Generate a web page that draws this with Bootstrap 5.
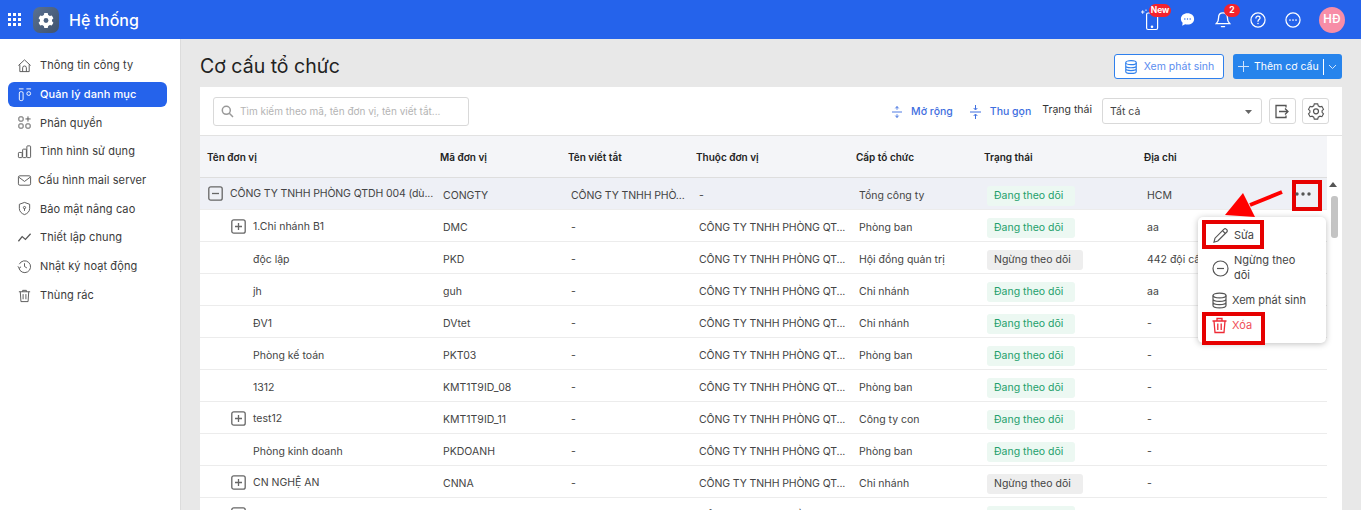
<!DOCTYPE html>
<html lang="vi">
<head>
<meta charset="utf-8">
<title>Cơ cấu tổ chức</title>
<link href="https://cdn.jsdelivr.net/npm/bootstrap@5.3.0/dist/css/bootstrap.min.css" rel="stylesheet">
<style>
html,body{height:510px;overflow:hidden}
body{font-family:Inter,"Noto Sans",sans-serif;font-size:11px;color:#333;background:#e8e8e8}
.topbar{height:39px;background:#2563eb;color:#fff;padding:0 16px 0 8px}
.topbar-title{font-size:16px;font-weight:500;margin-left:10px}
.app-logo{width:26px;height:26px;border-radius:7px;background:linear-gradient(135deg,#5a7191,#40536e);margin-left:12px}
.top-icon{position:relative;display:flex}
.pill{position:absolute;background:#f5222d;color:#fff;font-weight:700;border-radius:9px;font-size:8.5px;line-height:13px;height:13px;text-align:center}
.avatar{width:26px;height:26px;border-radius:50%;background:#f78da7;font-size:11.5px;font-weight:600}
.shell{height:471px}
.sidebar{width:181px;flex:none;background:#fff;border-right:1px solid #dcdcdc;padding-top:14px}
.side-item{height:25px;margin:0 13px 3.7px 8px;padding-left:9px;border-radius:6px;color:#3a3a3a;gap:8px;font-size:11px;letter-spacing:.1px}
.side-item svg{width:15px;height:15px;flex:none}
.side-item.on{background:#2563eb;color:#fff;font-weight:500}
.page{flex:1;min-width:0;padding:0 19px 0 19px;position:relative}
.page-head{height:48px;padding-top:7px}
.page-title{font-size:19.5px;font-weight:400;color:#222;margin:0}
.btn-ghost{height:25px;width:110px;background:#fff;border:1px solid #2f80ed;border-radius:3px;color:#5b8def;font-size:10.5px;gap:6px}
.btn-add{height:25px;width:109px;background:#2784ec;border-radius:3px;color:#fff;font-size:10.5px;margin-left:9px}
.panel{background:#fff;height:423px;overflow:hidden;position:relative}
.tools{height:49px;padding:0 13px;border-bottom:1px solid #e2e2e2}
.search-box{width:256px;height:29px;border:1px solid #d9d9d9;border-radius:3px;color:#b4b4b4;font-size:10px;padding-left:7px;gap:6px}
.tool-link{color:#3f6fe0;font-weight:500;font-size:10.5px;gap:9px;padding-top:1px}
.tool-first{gap:9px;margin-right:17px}
.tool-last{margin-right:11px}
.status-label{margin-right:10px;font-size:10.5px;position:relative;top:-1px}
.status-sel{width:160px;height:26px;border:1px solid #d9d9d9;border-radius:3px;padding:1px 9px 0 7px;color:#444;font-size:10.5px}
.square-btn{width:27px;height:26px;border:1px solid #d9d9d9;border-radius:3px;margin-left:6.5px}
.table-wrap{width:1127px}
.org-table{table-layout:fixed;width:1127px;margin:0;font-size:10.5px;color:#444;border-collapse:collapse}
.org-table th{height:41px;background:#f4f5f8;font-weight:600;color:#222;padding:2px 0 0 3px;border-bottom:1px solid #dedede;font-size:10px;vertical-align:middle}
.org-table th:first-child{padding-left:7px}
.org-table td{height:32px;padding:5px 0 0 6px;border-bottom:1px solid #ececec;white-space:nowrap;overflow:hidden;vertical-align:middle}
.org-table td:nth-child(3),.org-table td:nth-child(4),.root .name-cell span{letter-spacing:-.12px}
.org-table tr.root td{background:#eef0f6}
.name-cell{display:flex;align-items:center;gap:7px;position:relative;top:-1px}
.lvl0{padding-left:2px;top:-2px}.lvl1{padding-left:25px}.lvl1b{padding-left:47px;top:0}
.box-ic{width:15px;height:15px;flex:none;display:block}
.st{display:inline-block;height:20px;line-height:20px;padding:0 7px;border-radius:3px;width:88px;font-size:10.5px;white-space:nowrap;vertical-align:middle}
.st-on{background:#ecf8f2;color:#23a06b}
.st-off{background:#eeeeee;color:#444;width:96px}
.v-thumb{position:absolute;left:1150px;top:157px;width:7px;height:42px;background:#c4c4c4;border-radius:3px}
.v-arrow{position:absolute;left:1148px;top:143px;width:0;height:0;border-left:4.5px solid transparent;border-right:4.5px solid transparent;border-bottom:5px solid #555}
.pop-menu{position:absolute;left:1017px;top:178px;width:128px;height:126px;background:#fff;border-radius:5px;box-shadow:0 1px 6px rgba(0,0,0,.25);z-index:5;font-size:11px;color:#444}
.pop-row{position:absolute;left:0;right:0;display:flex;align-items:center;gap:5px;padding-left:14px}
.pop-row svg{width:17px;height:17px;flex:none}
.pop-edit{top:5px;height:26px}
.pop-stop{top:34px;height:34px;line-height:15px}
.pop-view{top:71px;height:24px;padding-left:13px;gap:4px}
.pop-del{top:96px;height:24px;padding-left:13px;gap:4px;color:#f0505a}
.mark-box{position:absolute;border:4px solid #e60000;z-index:6}
.mark-dots{left:1111px;top:141px;width:30px;height:31px}
.mark-edit{left:1021px;top:181px;width:62px;height:29px}
.mark-del{left:1021px;top:273px;width:63px;height:33px}
.big-arrow{position:absolute;left:1040px;top:148px;width:66px;height:36px;z-index:7}
.dots{position:absolute;left:1114px;top:153px;z-index:7}
</style>
</head>
<body>
<nav class="topbar d-flex align-items-center">
  <svg width="13" height="13" viewBox="0 0 13 13" fill="#fff"><rect width="3" height="3"/><rect x="5" width="3" height="3"/><rect x="10" width="3" height="3"/><rect y="5" width="3" height="3"/><rect x="5" y="5" width="3" height="3"/><rect x="10" y="5" width="3" height="3"/><rect y="10" width="3" height="3"/><rect x="5" y="10" width="3" height="3"/><rect x="10" y="10" width="3" height="3"/></svg>
  <span class="app-logo d-flex align-items-center justify-content-center">
    <svg width="16" height="16" viewBox="0 0 16 16"><path d="M6.300 1h3.400l.5 1.900 1.700 1 1.900-.5 1.600 2.900-1.400 1.400v1.600l1.400 1.400-1.600 2.900-1.900-.5-1.700 1-.5 1.900H6.300l-.5-1.900-1.700-1-1.900.5L.6 10.700 2 9.300V7.700L.6 6.300l1.600-2.900 1.900.5 1.700-1z" fill="#fff"/><circle cx="8" cy="8.500" r="2.400" fill="#4d6381"/></svg>
  </span>
  <span class="topbar-title">Hệ thống</span>
  <div class="ms-auto d-flex align-items-center">
    <span class="top-icon" style="margin-right:16px">
      <svg width="24" height="24" viewBox="0 0 24 24" fill="none" stroke="#fff" stroke-width="1.200"><rect x="6.600" y="5" width="11" height="16.500" rx="1.500"/><circle cx="12" cy="18.800" r=".7" fill="#fff"/><path d="M1 4h3.500M2.700 2.300v3.500M6 1.500v1.500" stroke-width=".9"/></svg>
      <span class="pill" style="left:9px;top:-3.500px;width:22px">New</span>
    </span>
    <span class="top-icon" style="margin-right:20px"><svg width="15" height="15" viewBox="0 0 17 16"><path d="M8.500 1C4.200 1 1 3.800 1 7.300c0 1.700.8 3.200 2 4.300L2.500 15l3.300-1.700c.9.300 1.800.4 2.700.4 4.300 0 7.500-2.800 7.500-6.400S12.800 1 8.500 1z" fill="#fff"/><circle cx="5.500" cy="7.500" r=".8" fill="#2563eb"/><circle cx="8.500" cy="7.500" r=".8" fill="#2563eb"/><circle cx="11.500" cy="7.500" r=".8" fill="#2563eb"/></svg></span>
    <span class="top-icon" style="margin-right:19px"><svg width="16" height="20" viewBox="0 0 17 20" fill="none" stroke="#fff" stroke-width="1.400"><path d="M8.500 2.500c-3 0-4.700 2.200-4.700 5 0 3.500-1 5-2.300 6.300h14c-1.300-1.300-2.300-2.800-2.300-6.300 0-2.800-1.700-5-4.700-5z"/><path d="M6.800 17h3.400" stroke-linecap="round"/></svg><span class="pill" style="left:9px;top:-5.500px;width:16px;border-radius:8px">2</span></span>
    <span class="top-icon" style="margin-right:19px"><svg width="16" height="16" viewBox="0 0 17 17" fill="none" stroke="#fff" stroke-width="1.300"><circle cx="8.500" cy="8.500" r="7.500"/><path d="M6.300 6.500c0-1.300 1-2.100 2.200-2.100s2.200.8 2.200 2c0 1.600-2.200 1.700-2.200 3.500" stroke-linecap="round"/><circle cx="8.500" cy="12.300" r=".8" fill="#fff" stroke="none"/></svg></span>
    <span class="top-icon" style="margin-right:18px"><svg width="16" height="16" viewBox="0 0 17 17" fill="none" stroke="#fff" stroke-width="1.300"><circle cx="8.500" cy="8.500" r="7.500"/><g fill="#fff" stroke="none"><circle cx="5.300" cy="8.500" r=".9"/><circle cx="8.500" cy="8.500" r=".9"/><circle cx="11.700" cy="8.500" r=".9"/></g></svg></span>
    <span class="avatar d-flex align-items-center justify-content-center">HĐ</span>
  </div>
</nav>
<div class="shell d-flex">
  <aside class="sidebar">
    <div class="side-item d-flex align-items-center"><svg viewBox="0 0 16 16" fill="none" stroke="#555" stroke-width="1"><path d="M1.500 8 8 2l6.500 6M3 7v7.500h10V7M6 14.500V10.500a2 2 0 0 1 4 0v4"/></svg>Thông tin công ty</div>
    <div class="side-item on d-flex align-items-center"><svg viewBox="0 0 16 16" fill="none" stroke="#fff" stroke-width="1"><path d="M2 2h5M10 2h5"/><rect x="2.500" y="5" width="4" height="9.500" rx="1.500"/><circle cx="12.500" cy="7" r="2"/></svg>Quản lý danh mục</div>
    <div class="side-item d-flex align-items-center"><svg viewBox="0 0 16 16" fill="none" stroke="#555" stroke-width="1"><rect x="2" y="2" width="4.500" height="4.500" rx="1"/><rect x="2" y="9.500" width="4.500" height="4.500" rx="1"/><rect x="9.500" y="9.500" width="4.500" height="4.500" rx="1"/><path d="M11.700 1.500v5.500M9 4.200h5.500"/></svg>Phân quyền</div>
    <div class="side-item d-flex align-items-center"><svg viewBox="0 0 16 16" fill="none" stroke="#555" stroke-width="1"><rect x="1.500" y="9" width="4" height="5.500" rx=".8"/><rect x="6" y="5.500" width="4" height="9" rx=".8"/><rect x="10.500" y="2" width="4" height="12.500" rx=".8"/></svg>Tình hình sử dụng</div>
    <div class="side-item d-flex align-items-center" style="gap:6px"><svg viewBox="0 0 16 16" fill="none" stroke="#555" stroke-width="1"><rect x="1.500" y="3" width="13" height="10" rx="1.500"/><path d="m2 4.500 6 4.500 6-4.500"/></svg>Cấu hình mail server</div>
    <div class="side-item d-flex align-items-center"><svg viewBox="0 0 16 16" fill="none" stroke="#555" stroke-width="1"><path d="M8 1.500 2.500 3.500V8c0 3.300 2.500 5.500 5.500 6.500 3-1 5.500-3.200 5.500-6.500V3.500z"/><circle cx="8" cy="7" r="1.200"/><path d="M8 8v2.500"/></svg>Bảo mật nâng cao</div>
    <div class="side-item d-flex align-items-center"><svg viewBox="0 0 16 16" fill="none" stroke="#555" stroke-width="1.300"><path d="m1.500 12 4-5 3.500 3 5.500-6"/></svg>Thiết lập chung</div>
    <div class="side-item d-flex align-items-center"><svg viewBox="0 0 16 16" fill="none" stroke="#555" stroke-width="1"><path d="M2.500 5.500A6.300 6.300 0 1 1 2 9.500"/><path d="M1 7.800 2.400 9.800 4.300 8.300M8 4.500V8l2.500 1.500"/></svg>Nhật ký hoạt động</div>
    <div class="side-item d-flex align-items-center"><svg viewBox="0 0 16 16" fill="none" stroke="#555" stroke-width="1"><path d="M2 4h12M6 4V2.500h4V4M3.500 4l.7 10.500h7.600L12.500 4M6.500 6.500v5.500M9.500 6.500v5.500"/></svg>Thùng rác</div>
  </aside>
  <main class="page">
    <div class="page-head d-flex align-items-center justify-content-between">
      <h1 class="page-title">Cơ cấu tổ chức</h1>
      <div class="d-flex align-items-center">
        <span class="btn-ghost d-flex align-items-center justify-content-center"><svg width="14" height="16" viewBox="0 0 16 17" fill="none" stroke="#2f80ed" stroke-width="1.300"><ellipse cx="8" cy="3.500" rx="6" ry="2.300"/><path d="M2 3.500v10c0 1.300 2.700 2.300 6 2.300s6-1 6-2.300v-10M2 7c0 1.300 2.700 2.300 6 2.300S14 8.300 14 7M2 10.300c0 1.300 2.700 2.300 6 2.300s6-1 6-2.300"/></svg>Xem phát sinh</span>
        <span class="btn-add d-flex align-items-center"><svg class="ms-1" width="13" height="13" viewBox="0 0 13 13" stroke="#cfe2fb" stroke-width="1"><path d="M6.500 1v11M1 6.500h11"/></svg><span class="ms-1">Thêm cơ cấu</span><span class="ms-1" style="width:1px;height:16px;background:#fff"></span><svg class="ms-1" width="9" height="9" viewBox="0 0 9 9" fill="none" stroke="#d5e6fb"><path d="m1 3 3.500 3.500L8 3"/></svg></span>
      </div>
    </div>
    <section class="panel">
      <div class="tools d-flex align-items-center">
        <div class="search-box d-flex align-items-center"><svg width="13" height="13" viewBox="0 0 13 13" fill="none" stroke="#999" stroke-width="1.500"><circle cx="5.300" cy="5.300" r="4"/><path d="m8.300 8.300 3.700 3.700"/></svg>Tìm kiếm theo mã, tên đơn vị, tên viết tắt...</div>
        <div class="ms-auto d-flex align-items-center">
          <span class="tool-link tool-first d-flex align-items-center"><svg width="10" height="14" viewBox="0 0 11 14" fill="none" stroke="#3f6fe0"><path d="M0 7h11M5.500 1v3.500M3.700 3l1.800-2 1.800 2M5.500 13V9.500M3.700 11l1.800 2 1.800-2"/></svg>Mở rộng</span>
          <span class="tool-link tool-last d-flex align-items-center"><svg width="11" height="14" viewBox="0 0 11 14" fill="none" stroke="#3f6fe0"><path d="M0 7h11M5.500 0v4.500M3.700 3l1.800 2 1.800-2M5.500 14V9.500M3.700 11l1.800-2 1.800 2"/></svg>Thu gọn</span>
          <span class="status-label">Trạng thái</span>
          <span class="status-sel d-flex align-items-center justify-content-between">Tất cả<svg width="7" height="4" viewBox="0 0 7 4" fill="#666"><path d="M0 0h7L3.500 4z"/></svg></span>
          <span class="square-btn d-flex align-items-center justify-content-center"><svg width="16" height="15" viewBox="0 0 16 15" fill="none" stroke="#555" stroke-width="1.300"><path d="M12 3.500V1.500H2v12h10v-2M5 7.500h9M11 4.500l3 3-3 3"/></svg></span>
          <span class="square-btn d-flex align-items-center justify-content-center"><svg width="18" height="18" viewBox="0 0 16 16" fill="none" stroke="#555" stroke-width="1.100"><path d="M6.300 1h3.400l.5 1.900 1.700 1 1.900-.5 1.600 2.900-1.400 1.400v1.600l1.400 1.400-1.600 2.900-1.900-.5-1.700 1-.5 1.900H6.300l-.5-1.900-1.700-1-1.900.5L.6 10.700 2 9.300V7.700L.6 6.300l1.600-2.900 1.900.5 1.700-1z" transform="translate(.8 .8) scale(.9)"/><circle cx="8" cy="8.300" r="2.200"/></svg></span>
        </div>
      </div>
      <div class="table-wrap">
      <table class="org-table">
        <colgroup><col style="width:237px"><col style="width:128px"><col style="width:128px"><col style="width:160px"><col style="width:128px"><col style="width:160px"><col style="width:140px"><col style="width:46px"></colgroup>
        <thead><tr><th>Tên đơn vị</th><th>Mã đơn vị</th><th>Tên viết tắt</th><th>Thuộc đơn vị</th><th>Cấp tổ chức</th><th>Trạng thái</th><th>Địa chỉ</th><th></th></tr></thead>
        <tbody>
          <tr class="root"><td><div class="name-cell lvl0"><svg class="box-ic" viewBox="0 0 15 15" fill="none" stroke="#666"><rect x=".8" y=".8" width="13.400" height="13.400" rx="2" stroke-width="1.300"/><path d="M4 7.500h7" stroke-width="1.300"/></svg><span>CÔNG TY TNHH PHÒNG QTDH 004 (dù...</span></div></td><td>CONGTY</td><td>CÔNG TY TNHH PHÒ...</td><td>-</td><td>Tổng công ty</td><td><span class="st st-on">Đang theo dõi</span></td><td>HCM</td><td></td></tr>
          <tr><td><div class="name-cell lvl1"><svg class="box-ic" viewBox="0 0 15 15" fill="none" stroke="#666"><rect x=".8" y=".8" width="13.400" height="13.400" rx="2" stroke-width="1.300"/><path d="M4 7.500h7M7.500 4v7" stroke-width="1.300"/></svg><span>1.Chi nhánh B1</span></div></td><td>DMC</td><td>-</td><td>CÔNG TY TNHH PHÒNG QT...</td><td>Phòng ban</td><td><span class="st st-on">Đang theo dõi</span></td><td>aa</td><td></td></tr>
          <tr><td><div class="name-cell lvl1b"><span>độc lập</span></div></td><td>PKD</td><td>-</td><td>CÔNG TY TNHH PHÒNG QT...</td><td>Hội đồng quản trị</td><td><span class="st st-off">Ngừng theo dõi</span></td><td>442 đội cấn</td><td></td></tr>
          <tr><td><div class="name-cell lvl1b"><span>jh</span></div></td><td>guh</td><td>-</td><td>CÔNG TY TNHH PHÒNG QT...</td><td>Chi nhánh</td><td><span class="st st-on">Đang theo dõi</span></td><td>aa</td><td></td></tr>
          <tr><td><div class="name-cell lvl1b"><span>ĐV1</span></div></td><td>DVtet</td><td>-</td><td>CÔNG TY TNHH PHÒNG QT...</td><td>Chi nhánh</td><td><span class="st st-on">Đang theo dõi</span></td><td>-</td><td></td></tr>
          <tr><td><div class="name-cell lvl1b"><span>Phòng kế toán</span></div></td><td>PKT03</td><td>-</td><td>CÔNG TY TNHH PHÒNG QT...</td><td>Phòng ban</td><td><span class="st st-on">Đang theo dõi</span></td><td>-</td><td></td></tr>
          <tr><td><div class="name-cell lvl1b"><span>1312</span></div></td><td>KMT1T9ID_08</td><td>-</td><td>CÔNG TY TNHH PHÒNG QT...</td><td>Phòng ban</td><td><span class="st st-on">Đang theo dõi</span></td><td>-</td><td></td></tr>
          <tr><td><div class="name-cell lvl1"><svg class="box-ic" viewBox="0 0 15 15" fill="none" stroke="#666"><rect x=".8" y=".8" width="13.400" height="13.400" rx="2" stroke-width="1.300"/><path d="M4 7.500h7M7.500 4v7" stroke-width="1.300"/></svg><span>test12</span></div></td><td>KMT1T9ID_11</td><td>-</td><td>CÔNG TY TNHH PHÒNG QT...</td><td>Công ty con</td><td><span class="st st-on">Đang theo dõi</span></td><td>-</td><td></td></tr>
          <tr><td><div class="name-cell lvl1b"><span>Phòng kinh doanh</span></div></td><td>PKDOANH</td><td>-</td><td>CÔNG TY TNHH PHÒNG QT...</td><td>Phòng ban</td><td><span class="st st-on">Đang theo dõi</span></td><td>-</td><td></td></tr>
          <tr><td><div class="name-cell lvl1"><svg class="box-ic" viewBox="0 0 15 15" fill="none" stroke="#666"><rect x=".8" y=".8" width="13.400" height="13.400" rx="2" stroke-width="1.300"/><path d="M4 7.500h7M7.500 4v7" stroke-width="1.300"/></svg><span>CN NGHỆ AN</span></div></td><td>CNNA</td><td>-</td><td>CÔNG TY TNHH PHÒNG QT...</td><td>Chi nhánh</td><td><span class="st st-off">Ngừng theo dõi</span></td><td>-</td><td></td></tr>
          <tr><td><div class="name-cell lvl1"><svg class="box-ic" viewBox="0 0 15 15" fill="none" stroke="#666"><rect x=".8" y=".8" width="13.400" height="13.400" rx="2" stroke-width="1.300"/><path d="M4 7.500h7M7.500 4v7" stroke-width="1.300"/></svg></div></td><td></td><td></td><td>CÔNG TY TNHH PHÒNG QT...</td><td></td><td><span class="st st-on"></span></td><td></td><td></td></tr>
        </tbody>
      </table>
      </div>
    </section>
    <div class="v-arrow"></div>
    <div class="v-thumb"></div>
    <svg class="big-arrow" viewBox="0 0 66 36"><path d="M61 5 29 18" stroke="#f00" stroke-width="4" fill="none"/><path d="M4 28 22 6 34 30z" fill="#f00"/></svg>
    <div class="mark-box mark-dots"></div>
    <svg class="dots" width="16" height="4" viewBox="0 0 16 4" fill="#555"><circle cx="2" cy="2" r="1.700"/><circle cx="8" cy="2" r="1.700"/><circle cx="14" cy="2" r="1.700"/></svg>
    <div class="pop-menu">
      <div class="pop-row pop-edit"><svg viewBox="0 0 17 17" fill="none" stroke="#555" stroke-width="1.200"><path d="M2 15.200l1-4L12 2.200a1.500 1.500 0 0 1 2.200 0l.6.600a1.500 1.500 0 0 1 0 2.200L5.800 14z"/><path d="M10.500 3.700l2.800 2.800"/></svg><span>Sửa</span></div>
      <div class="pop-row pop-stop"><svg viewBox="0 0 17 17" fill="none" stroke="#555" stroke-width="1.200"><circle cx="8.500" cy="8.500" r="7.500"/><path d="M5 8.500h7"/></svg><span>Ngừng theo<br>dõi</span></div>
      <div class="pop-row pop-view"><svg viewBox="0 0 16 17" fill="none" stroke="#555" stroke-width="1.200"><ellipse cx="8" cy="3.500" rx="6.500" ry="2.400"/><path d="M1.500 3.500v10c0 1.300 2.900 2.400 6.500 2.400s6.500-1.100 6.500-2.400v-10M1.500 7c0 1.300 2.900 2.400 6.500 2.400S14.500 8.300 14.500 7M1.500 10.300c0 1.300 2.900 2.400 6.500 2.400s6.500-1.100 6.500-2.400"/></svg><span>Xem phát sinh</span></div>
      <div class="pop-row pop-del"><svg viewBox="0 0 17 17" fill="none" stroke="#ee2a35" stroke-width="1.300"><path d="M1.500 4h14M6 4V1.500h5V4M3 4l1 11.500h9L14 4M6.800 6.500v6.500M10.200 6.500v6.500"/></svg><span>Xóa</span></div>
    </div>
    <div class="mark-box mark-edit"></div>
    <div class="mark-box mark-del"></div>
  </main>
</div>
</body>
</html>
